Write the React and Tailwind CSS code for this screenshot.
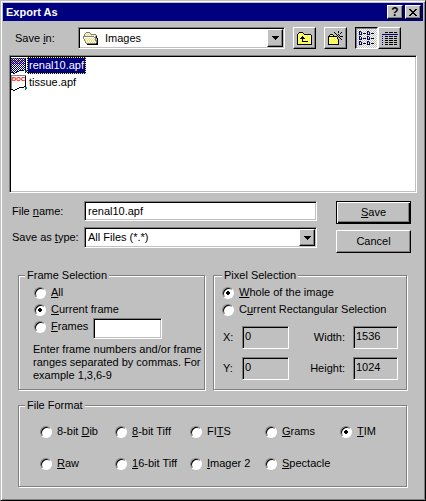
import { useState } from "react"
import clsx from "clsx"

const sunken =
  "border border-t-[#808080] border-l-[#808080] border-r-white border-b-white shadow-[inset_1px_1px_0_#000,inset_-1px_-1px_0_#c0c0c0]"
const flatSunken =
  "border border-t-[#808080] border-l-[#808080] border-r-white border-b-white shadow-[inset_1px_1px_0_#000]"
const raised =
  "border border-t-white border-l-white border-r-black border-b-black shadow-[inset_-1px_-1px_0_#808080]"
const pressed =
  "border border-t-black border-l-black border-r-white border-b-white shadow-[inset_1px_1px_0_#808080]"

const palette = {
  k: "#000000",
  y: "#ffff00",
  l: "#ffffc0",
  o: "#e8e060",
  w: "#ffffff",
  g: "#808080",
  s: "#c0c0c0",
  b: "#000080",
  t: "#008080",
}

const openFolder = [
  "...gggg.........",
  "..gwowog........",
  ".gwowowoggggg...",
  ".gowowowowowog..",
  "gggggggggggwgk..",
  "gwwwwwwwwwwggk..",
  "gwowowowowowggk.",
  ".gwowowowowogok.",
  ".gowowowowowggk.",
  "..gwowowowowogk.",
  "..gowowowowowgk.",
  "...ggggggggggkk.",
  "....kkkkkkkkkkk.",
]

const upFolder = [
  "..kkkk.........",
  ".klylyk........",
  "kylylylkkkkkkk.",
  "klylylylylylylk",
  "kylylkylylylylk",
  "klylkkklylylylk",
  "kylkkkkkylylylk",
  "klylykylylylylk",
  "kylylkylylylylk",
  "klylykkkkkklylk",
  "kylylylylylylyk",
  "klylylylylylylk",
  "kkkkkkkkkkkkkkk",
]

const newFolder = [
  "..........k....",
  "......k...k..k.",
  ".......k....k..",
  "..kkk...k.k....",
  ".kylyk...k.k...",
  "kkkkkkkkk.k.kkk",
  "kylylylylk.k...",
  "klylylylyk..k..",
  "kylylylylyk..k.",
  "klylylylylk....",
  "kylylylylyk....",
  "klylylylylk....",
  "kylylylylyk....",
  "kkkkkkkkkkk....",
]

const listView = [
  "bb......bb......",
  "b.b.....b.b.....",
  "b.b.kkk.b.b.kkk.",
  "bbb.....bbb.....",
  "................",
  "bb......bb......",
  "b.b.....b.b.....",
  "b.b.kkk.b.b.kkk.",
  "bbb.....bbb.....",
  "................",
  "bb......bb......",
  "b.b.....b.b.....",
  "b.b.kkk.b.b.kkk.",
  "bbb.....bbb.....",
]

const detailsView = [
  "...kkk.kkkk.kkk.",
  "................",
  "bbbbbbbbbbbbbbbb",
  "................",
  "b..kkk.kkkk.kkk.",
  "................",
  "b..kkk.kkkk.kkk.",
  "................",
  "b..kkk.kkkk.kkk.",
  "................",
  "b..kkk.kkkk.kkk.",
  "................",
  "b..kkk.kkkk.kkk.",
]

const docPage = [
  "ggggggggggggggg.",
  "gwwwwwwwwwwwwwk.",
  "gwwwwwwwwwwwwwk.",
  "gwwwwwwwwwwwwwk.",
  "gwwwwwwwwwwwwwk.",
  "gwwwwwwwwwwwwwk.",
  "gwwwwwwwwwwwwwk.",
  "gwwwwwwwwwwwwwk.",
  "gwwwwwwwwwwwwwk.",
  "gwwwwwwwwwwwwwk.",
  "gwwwwwwwwwwwwwk.",
  "gwwwwwwwwwwwwkk.",
  "gwwwwwwwkkkkk.tt",
  "gwwwwwkk......tt",
  "kkwwkk........t.",
  "..kk............",
]

const cross = [
  "kk....kk",
  ".kk..kk.",
  "..kkkk..",
  "...kk...",
  "..kkkk..",
  ".kk..kk.",
  "kk....kk",
]

const arrow = ["kkkkkkk", ".kkkkk.", "..kkk..", "...k..."]

const Pixels = ({ rows, dither = false, className, children }) => (
  <svg
    width={rows[0].length}
    height={rows.length}
    shapeRendering="crispEdges"
    aria-hidden="true"
    className={clsx("shrink-0", className)}
  >
    {rows.map((row, y) =>
      [...row].map((c, x) =>
        c === "." ? null : <rect key={`${x}-${y}`} x={x} y={y} width="1" height="1" fill={palette[c]} />
      )
    )}
    {children}
    {dither &&
      rows.map((row, y) =>
        [...row].map((c, x) =>
          c !== "." && (x + y) % 2 === 0 ? (
            <rect key={`d${x}-${y}`} x={x} y={y} width="1" height="1" fill="#000080" />
          ) : null
        )
      )}
  </svg>
)

const DropArrow = () => (
  <span className={clsx(raised, "pointer-events-none flex w-4 shrink-0 items-center justify-center bg-[#c0c0c0]")}>
    <Pixels rows={arrow} />
  </span>
)

const ToolButton = ({ label, rows, active = false, onClick }) => (
  <button
    type="button"
    aria-label={label}
    onClick={onClick}
    className={clsx(
      "flex h-[22px] w-[23px] shrink-0 items-center justify-center",
      active
        ? [pressed, "bg-[repeating-conic-gradient(#fff_0_25%,#c0c0c0_0_50%)] bg-[length:2px_2px]"]
        : [raised, "bg-[#c0c0c0]"]
    )}
  >
    <Pixels rows={rows} />
  </button>
)

const Group = ({ title, className, children }) => (
  <fieldset
    className={clsx(
      "min-w-0 border border-[#808080] shadow-[1px_1px_0_#fff,inset_1px_1px_0_#fff]",
      className
    )}
  >
    <legend className="bg-[#c0c0c0] px-0.5">{title}</legend>
    {children}
  </fieldset>
)

const Radio = ({ name, value, current, onChange, children }) => (
  <label className="flex h-[17px] items-center gap-[5px] whitespace-nowrap">
    <input
      type="radio"
      name={name}
      value={value}
      checked={current === value}
      onChange={() => onChange(value)}
      className="size-3 shrink-0 appearance-none rounded-full border border-t-[#808080] border-l-[#808080] border-r-white border-b-white bg-white shadow-[inset_1px_1px_0_#000] checked:bg-[radial-gradient(circle,#000_2px,#fff_2px)]"
    />
    <span>{children}</span>
  </label>
)

const files = ["renal10.apf", "tissue.apf"]

const formats = [
  { id: "dib", label: <>8-bit <u>D</u>ib</> },
  { id: "tiff8", label: <><u>8</u>-bit Tiff</> },
  { id: "fits", label: <>FI<u>T</u>S</> },
  { id: "grams", label: <><u>G</u>rams</> },
  { id: "tim", label: <><u>T</u>IM</> },
  { id: "raw", label: <><u>R</u>aw</> },
  { id: "tiff16", label: <><u>1</u>6-bit Tiff</> },
  { id: "imager", label: <><u>I</u>mager 2</> },
  { id: "spectacle", label: <><u>S</u>pectacle</> },
]

const App = () => {
  const [selected, setSelected] = useState("renal10.apf")
  const [fileName, setFileName] = useState("renal10.apf")
  const [view, setView] = useState("list")
  const [frame, setFrame] = useState("current")
  const [frames, setFrames] = useState("")
  const [area, setArea] = useState("whole")
  const [format, setFormat] = useState("tim")

  const pick = (file) => {
    setSelected(file)
    setFileName(file)
  }

  return (
    <main className="min-h-screen border border-t-[#c0c0c0] border-l-[#c0c0c0] border-r-black border-b-black bg-[#c0c0c0] p-0.5 font-['Liberation_Sans',Arial,sans-serif] text-[11px] leading-[13px] text-black shadow-[inset_1px_1px_0_#fff,inset_-1px_-1px_0_#808080]">
      <header className="flex h-[18px] items-center gap-0.5 bg-[#000080] pr-0.5 pl-[3px]">
        <h1 className="flex-1 font-bold text-white">Export As</h1>
        <button
          type="button"
          aria-label="Help"
          className={clsx(raised, "flex h-3.5 w-4 items-center justify-center bg-[#c0c0c0] text-[12px] font-bold")}
        >
          ?
        </button>
        <button
          type="button"
          aria-label="Close"
          className={clsx(raised, "flex h-3.5 w-4 items-center justify-center bg-[#c0c0c0]")}
        >
          <Pixels rows={cross} />
        </button>
      </header>

      <div className="mt-1.5 flex items-center gap-2 pr-[22px] pl-3">
        <label htmlFor="folder" className="w-[55px] shrink-0">
          Save <u>i</u>n:
        </label>
        <div className={clsx(sunken, "flex h-[22px] min-w-0 flex-1 bg-white p-px pl-1")}>
          <Pixels rows={openFolder} className="self-center" />
          <select id="folder" className="min-w-0 flex-1 appearance-none bg-transparent pl-1.5 outline-none">
            <option>Images</option>
          </select>
          <DropArrow />
        </div>
        <ToolButton label="Up one level" rows={upFolder} />
        <ToolButton label="Create new folder" rows={newFolder} />
        <div className="flex">
          <ToolButton label="List" rows={listView} active={view === "list"} onClick={() => setView("list")} />
          <ToolButton
            label="Details"
            rows={detailsView}
            active={view === "details"}
            onClick={() => setView("details")}
          />
        </div>
      </div>

      <ul className={clsx(sunken, "mx-1.5 mt-1.5 h-[138px] overflow-auto bg-white p-px")}>
        {files.map((file) => (
          <li key={file}>
            <button type="button" onClick={() => pick(file)} className="flex h-[17px] items-center">
              <Pixels rows={docPage} dither={selected === file}>
                <text
                  x="1"
                  y="6"
                  fill={selected === file ? "#800040" : "#ff0000"}
                  className="font-['Liberation_Sans',Arial,sans-serif] text-[6px] font-bold"
                >
                  DOC
                </text>
              </Pixels>
              <span
                className={clsx(
                  "border border-dotted px-px leading-[15px]",
                  selected === file ? "border-[#ffff00] bg-[#000080] text-white" : "border-transparent"
                )}
              >
                {file}
              </span>
            </button>
          </li>
        ))}
      </ul>

      <div className="mt-2 flex gap-[19px] pr-3 pl-[9px]">
        <div className="flex flex-1 flex-col gap-1.5">
          <div className="flex h-5 items-center">
            <label htmlFor="filename" className="w-[72px] shrink-0">
              File <u>n</u>ame:
            </label>
            <input
              id="filename"
              type="text"
              value={fileName}
              onChange={(e) => setFileName(e.target.value)}
              className={clsx(sunken, "h-full min-w-0 flex-1 bg-white px-[3px] outline-none")}
            />
          </div>
          <div className="flex h-[21px] items-center">
            <label htmlFor="filetype" className="w-[72px] shrink-0">
              Save as <u>t</u>ype:
            </label>
            <div className={clsx(sunken, "flex h-full min-w-0 flex-1 bg-white p-px")}>
              <select id="filetype" className="min-w-0 flex-1 appearance-none bg-transparent pl-0.5 outline-none">
                <option>All Files (*.*)</option>
              </select>
              <DropArrow />
            </div>
          </div>
        </div>
        <div className="flex w-[75px] flex-col gap-1.5">
          <button
            type="submit"
            className="h-[23px] border border-black bg-[#c0c0c0] shadow-[inset_1px_1px_0_#fff,inset_-1px_-1px_0_#000,inset_-2px_-2px_0_#808080]"
          >
            <u>S</u>ave
          </button>
          <button type="button" className={clsx(raised, "h-[23px] bg-[#c0c0c0]")}>
            Cancel
          </button>
        </div>
      </div>

      <div className="mt-4 grid grid-cols-[187fr_194fr] gap-2 pr-4 pl-[15px]">
        <Group title="Frame Selection" className="pb-[7px] pl-1.5">
          <div className="pt-0.5 pl-[9px]">
            <Radio name="frame" value="all" current={frame} onChange={setFrame}>
              <u>A</u>ll
            </Radio>
            <Radio name="frame" value="current" current={frame} onChange={setFrame}>
              <u>C</u>urrent frame
            </Radio>
            <div className="flex">
              <div className="w-[59px] shrink-0">
                <Radio name="frame" value="frames" current={frame} onChange={setFrame}>
                  <u>F</u>rames
                </Radio>
              </div>
              <input
                type="text"
                aria-label="Frame numbers"
                value={frames}
                onChange={(e) => setFrames(e.target.value)}
                className={clsx(sunken, "h-[21px] w-[69px] bg-white px-[3px] outline-none")}
              />
            </div>
          </div>
          <p className="mt-1 pl-2">
            Enter frame numbers and/or frame ranges separated by commas. For example 1,3,6-9
          </p>
        </Group>

        <Group title="Pixel Selection" className="px-2 pb-[9px]">
          <div className="pt-0.5">
            <Radio name="area" value="whole" current={area} onChange={setArea}>
              <u>W</u>hole of the image
            </Radio>
            <Radio name="area" value="rect" current={area} onChange={setArea}>
              C<u>u</u>rrent Rectangular Selection
            </Radio>
          </div>
          <div className="mt-2 grid grid-cols-[20px_47px_1fr_45px] items-center gap-y-2">
            <label htmlFor="x" className="pl-px">X:</label>
            <input id="x" readOnly value="0" className={clsx(flatSunken, "h-[23px] min-w-0 px-0.5 pb-1")} />
            <label htmlFor="width" className="pr-2 text-right">Width:</label>
            <input id="width" readOnly value="1536" className={clsx(flatSunken, "h-[23px] min-w-0 px-0.5 pb-1")} />
            <label htmlFor="y" className="pl-px">Y:</label>
            <input id="y" readOnly value="0" className={clsx(flatSunken, "h-[23px] min-w-0 px-0.5 pb-1")} />
            <label htmlFor="height" className="pr-2 text-right">Height:</label>
            <input id="height" readOnly value="1024" className={clsx(flatSunken, "h-[23px] min-w-0 px-0.5 pb-1")} />
          </div>
        </Group>
      </div>

      <div className="mt-[9px] pr-4 pb-2.5 pl-[15px]">
        <Group title="File Format" className="px-1.5 pb-3.5">
          <div className="grid grid-cols-[repeat(4,75fr)_60fr] gap-y-[15px] pt-[11px] pl-[15px]">
            {formats.map((f) => (
              <Radio key={f.id} name="format" value={f.id} current={format} onChange={setFormat}>
                {f.label}
              </Radio>
            ))}
          </div>
        </Group>
      </div>
    </main>
  )
}

export default App
